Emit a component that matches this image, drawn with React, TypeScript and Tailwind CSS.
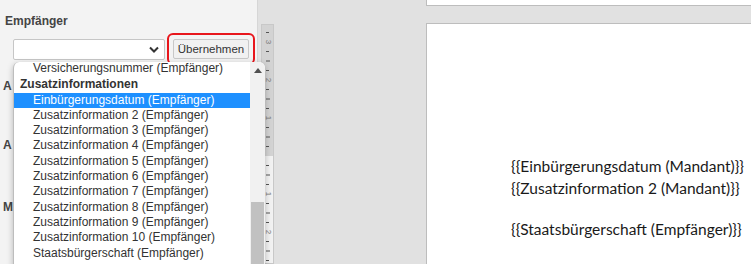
import React from "react";

const options = [
  "Zusatzinformation 2 (Empfänger)",
  "Zusatzinformation 3 (Empfänger)",
  "Zusatzinformation 4 (Empfänger)",
  "Zusatzinformation 5 (Empfänger)",
  "Zusatzinformation 6 (Empfänger)",
  "Zusatzinformation 7 (Empfänger)",
  "Zusatzinformation 8 (Empfänger)",
  "Zusatzinformation 9 (Empfänger)",
  "Zusatzinformation 10 (Empfänger)",
  "Staatsbürgerschaft (Empfänger)",
];

function Ruler() {
  const ticks = [];
  // 0 at y=132 inside the ruler (page y 156), 38px per cm, quarter ticks
  for (let i = -14; i <= 12; i++) {
    const y = 132 + i * 9.5;
    if (y < 2 || y > 250) continue;
    if (i % 4 === 0) continue;
    const long = Math.abs(i % 4) === 2;
    ticks.push(<line key={i} x1={5} x2={long ? 9 : 8} y1={y} y2={y} stroke="#555" strokeWidth={1} />);
  }
  const nums = [
    { y: 18, t: "3" },
    { y: 56, t: "2" },
    { y: 94, t: "1" },
    { y: 170, t: "1" },
    { y: 208, t: "2" },
  ];
  return (
    <svg width="13" height="240" className="block">
      <rect x="0" y="0" width="13" height="132" fill="#d3d3d3" />
      <rect x="0" y="132" width="13" height="108" fill="#f2f2f2" />
      <rect x="0.5" y="0.5" width="12" height="239" fill="none" stroke="#c8c8c8" />
      {ticks}
      {nums.map((n) => (
        <text
          key={n.y}
          x={7}
          y={n.y}
          fontSize="8"
          fill="#777"
          fontFamily="Liberation Sans, sans-serif"
          textAnchor="middle"
          dominantBaseline="middle"
          transform={`rotate(90 7 ${n.y})`}
        >
          {n.t}
        </text>
      ))}
    </svg>
  );
}

export default function App() {
  return (
    <div className="relative flex h-[264px] w-[751px] overflow-hidden bg-[#e1e1e1] font-['Liberation_Sans',Arial,sans-serif]">
      {/* sidebar */}
      <aside className="h-full w-[258px] shrink-0 border-r border-[#d6d6d6] bg-[#f3f3f3] pl-[13px] pt-[13px]">
        <p className="-ml-[8px] text-[12px] font-bold leading-[16px] text-[#444]">Empfänger</p>
        <div className="mt-[4px] flex items-start">
          <div className="mt-[6px] flex h-[21px] w-[152px] items-center justify-end rounded-[2px] border border-[#c6c6c6] bg-white pr-[5px]">
            <svg width="10" height="7" viewBox="0 0 10 7">
              <path d="M1 1.5 L5 5.5 L9 1.5" fill="none" stroke="#333" strokeWidth="2" />
            </svg>
          </div>
          <div className="ml-[2px] rounded-[6px] border-2 border-[#e8161c] p-[4px]">
            <button className="block h-[20px] w-[76px] rounded-[2px] border border-[#c8c8c8] bg-[#f1f1f1] text-[11.5px] leading-[18px] text-[#333]">
              Übernehmen
            </button>
          </div>
        </div>
        <p className="-ml-[10px] mt-[13px] text-[12px] font-bold leading-[16px] text-[#444]">A</p>
        <p className="-ml-[10px] mt-[43px] text-[12px] font-bold leading-[16px] text-[#444]">A</p>
        <p className="-ml-[10px] mt-[46px] text-[12px] font-bold leading-[16px] text-[#444]">M</p>
      </aside>

      {/* ruler + workspace */}
      <div className="flex flex-1">
        <div className="ml-[3px] pt-[24px]">
          <Ruler />
        </div>
        <div className="ml-[152px] flex flex-1 flex-col">
          <div className="h-[6px] border-b border-l border-[#bdbdbd] bg-white" />
          <div className="h-[17px]" />
          <div className="flex-1 border-l border-t border-[#bdbdbd] bg-white pl-[84px] pt-[131px] font-['Lato',sans-serif] text-[15.5px] leading-[22px] text-[#1a1a1a]">
            <p>{"{{Einbürgerungsdatum (Mandant)}}"}</p>
            <p>{"{{Zusatzinformation 2 (Mandant)}}"}</p>
            <p className="mt-[19px]">{"{{Staatsbürgerschaft (Empfänger)}}"}</p>
          </div>
        </div>
      </div>

      {/* open dropdown list */}
      <div className="absolute left-[13px] top-[62px] flex h-[220px] w-[252px] overflow-hidden rounded-t-[6px] border-l border-[#bdbdbd] bg-white shadow-[0_2px_6px_rgba(0,0,0,0.25)]">
        <ul className="flex-1 text-[12px] leading-[15.3px] text-[#333]">
          <li className="-mt-[1px] pl-[19px]">Versicherungsnummer (Empfänger)</li>
          <li className="pl-[6px] pt-[1px] font-bold">Zusatzinformationen</li>
          <li className="bg-[#1e90ff] pl-[19px] text-white">Einbürgerungsdatum (Empfänger)</li>
          {options.map((o) => (
            <li key={o} className="pl-[19px]">
              {o}
            </li>
          ))}
        </ul>
        <div className="flex w-[15px] flex-col bg-[#f1f1f1]">
          <div className="flex h-[16px] items-center justify-center">
            <svg width="8" height="5" viewBox="0 0 8 5">
              <path d="M0 5 L4 0 L8 5 Z" fill="#505050" />
            </svg>
          </div>
          <div className="mx-[1px] mt-[124px] flex-1 bg-[#c1c1c1]" />
        </div>
      </div>
    </div>
  );
}
